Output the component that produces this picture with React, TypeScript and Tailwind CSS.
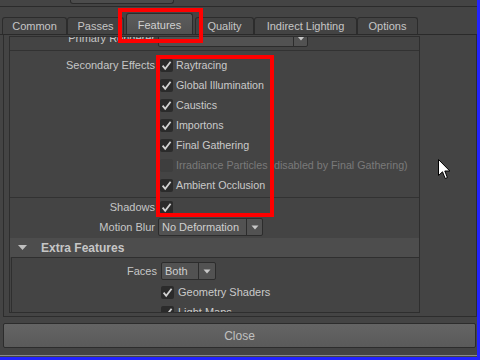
import React from "react";

const Check = ({ on = true, disabled = false }: { on?: boolean; disabled?: boolean }) => (
  <div
    className={
      "w-[13px] h-[13px] rounded-[2px] flex items-center justify-center shrink-0 " +
      (disabled ? "bg-[#3e3e3e]" : "bg-[#2b2b2b]")
    }
  >
    {on && (
      <svg width="13" height="13" viewBox="0 0 13 13">
        <path d="M2.6 6.6 L5.2 9.8 L10.6 2.7" fill="none" stroke="#d2d2d2" strokeWidth="1.8" />
      </svg>
    )}
  </div>
);

const Arrow = () => (
  <svg width="8" height="5" viewBox="0 0 8 5">
    <path d="M0.5 0.5 L7.5 0.5 L4 4.5 Z" fill="#c8c8c8" />
  </svg>
);

const Drop = ({ text, w, aw, pl }: { text: string; w: string; aw: string; pl: string }) => (
  <div
    className={
      "h-[18px] flex border border-[#2c2c2c] rounded-[2px] bg-[#525252] text-[#cfcfcf] " + w
    }
  >
    <div className={"flex-1 flex items-center leading-none " + pl}>{text}</div>
    <div className={"border-l border-[#2c2c2c] flex items-center justify-center " + aw}>
      <Arrow />
    </div>
  </div>
);

const CRow = ({ label, disabled = false, on = true }: { label: string; disabled?: boolean; on?: boolean }) => (
  <div className="h-[20px] flex items-center gap-[3px] pl-[2px]">
    <Check on={on} disabled={disabled} />
    <span className={"text-[10.7px] " + (disabled ? "text-[#7a7a7a]" : "text-[#cacaca]")}>{label}</span>
  </div>
);

export default function App() {
  const tabs = [
    { t: "Common", w: "w-[65px]" },
    { t: "Passes", w: "w-[57px]" },
  ];
  const tabs2 = [
    { t: "Quality", w: "w-[59px]" },
    { t: "Indirect Lighting", w: "w-[103px]" },
    { t: "Options", w: "w-[61px]" },
  ];
  return (
    <div
      className="w-[480px] h-[360px] bg-[#444444] relative overflow-hidden flex flex-col text-[11px] text-[#c6c6c6] border-r-[3px] border-b-[3px] border-[#2323ff]"
      style={{ fontFamily: '"Liberation Sans", Arial, sans-serif' }}
    >
      {/* top strip */}
      <div className="h-[7px] border-b border-[#2b2b2b] shrink-0">
        <div className="ml-[70px] w-[104px] h-[4px] border border-t-0 border-[#2b2b2b] rounded-b-[3px] bg-[#4c4c4c]" />
      </div>
      {/* tabs */}
      <div className="h-[28px] shrink-0 flex items-end pl-[2px] border-b border-[#2a2a2a]">
        {tabs.map((x) => (
          <div
            key={x.t}
            className={
              "h-[17px] border border-b-0 border-[#2c2c2c] rounded-t-[3px] bg-[#434343] flex items-center justify-center leading-none " +
              x.w
            }
          >
            {x.t}
          </div>
        ))}
        <div className="ml-[2px] w-[67px] h-[21px] border border-b-0 border-[#2c2c2c] rounded-t-[3px] bg-gradient-to-b from-[#5c5c5c] to-[#515151] flex items-center justify-center leading-none pt-[2px] text-[#d0d0d0]">
          Features
        </div>
        <div className="w-[2px]" />
        {tabs2.map((x) => (
          <div
            key={x.t}
            className={
              "h-[17px] border border-b-0 border-[#2c2c2c] rounded-t-[3px] bg-[#434343] flex items-center justify-center leading-none " +
              x.w
            }
          >
            {x.t}
          </div>
        ))}
      </div>
      {/* pane */}
      <div className="h-[282px] shrink-0 ml-[3px] border-l border-r border-b border-[#2d2d2d] pt-[1px] pl-[5px] flex">
        <div className="w-[411px] h-[277px] border border-[#2e2e2e] overflow-hidden">
          <div className="mt-[-8px]">
            {/* primary renderer */}
            <div className="h-[18px] flex items-center">
              <div className="w-[145px] text-right">Primary Renderer</div>
              <div className="ml-[3px] w-[150px] h-[18px] flex border border-[#2c2c2c] rounded-[2px] bg-[#525252]">
                <div className="flex-1" />
                <div className="w-[14px] border-l border-[#2c2c2c] flex items-center justify-center">
                  <Arrow />
                </div>
              </div>
            </div>
            <div className="mt-[3px] h-[1px] bg-[#323232]" />
            {/* secondary effects */}
            <div className="mt-[4px] flex">
              <div className="w-[145px] text-right h-[20px] leading-[20px]">Secondary Effects</div>
              <div className="ml-[3px] flex flex-col">
                <CRow label="Raytracing" />
                <CRow label="Global Illumination" />
                <CRow label="Caustics" />
                <CRow label="Importons" />
                <CRow label="Final Gathering" />
                <CRow label="Irradiance Particles (disabled by Final Gathering)" disabled on={false} />
                <CRow label="Ambient Occlusion" />
              </div>
            </div>
            <div className="mt-[2px] h-[1px] bg-[#323232]" />
            <div className="h-[18px] flex items-center">
              <div className="w-[145px] text-right">Shadows</div>
              <div className="ml-[5px]">
                <Check />
              </div>
            </div>
            <div className="mt-[2px] h-[18px] flex items-center">
              <div className="w-[145px] text-right">Motion Blur</div>
              <div className="ml-[3px]">
                <Drop text="No Deformation" w="w-[105px]" aw="w-[16px]" pl="pl-[3px]" />
              </div>
            </div>
            {/* header */}
            <div className="mt-[2px] h-[19px] bg-[#4d4d4d] flex items-center">
              <div className="ml-[8px] w-[9px] flex justify-center">
                <svg width="9" height="6" viewBox="0 0 9 6">
                  <path d="M0 0 L9 0 L4.5 5 Z" fill="#bfbfbf" />
                </svg>
              </div>
              <div className="ml-[14px] font-bold text-[12px] text-[#c6c6c6]">Extra Features</div>
            </div>
            {/* nested frame */}
            <div className="ml-[1px] border-l border-t border-[#2f2f2f] pt-[4px]">
              <div className="h-[18px] flex items-center">
                <div className="w-[145px] text-right">Faces</div>
                <div className="ml-[4px]">
                  <Drop text="Both" w="w-[55px]" aw="w-[17px]" pl="pl-[3px]" />
                </div>
              </div>
              <div className="mt-[3px] h-[18px] flex items-center">
                <div className="w-[145px]" />
                <div className="ml-[4px] flex items-center gap-[4px]">
                  <Check />
                  <span className="text-[#cacaca]">Geometry Shaders</span>
                </div>
              </div>
              <div className="mt-[2px] h-[18px] flex items-center">
                <div className="w-[145px]" />
                <div className="ml-[4px] flex items-center gap-[4px]">
                  <Check />
                  <span className="text-[#cacaca]">Light Maps</span>
                </div>
              </div>
            </div>
          </div>
        </div>
        <div className="flex-1" />
      </div>
      {/* close button */}
      <div className="mt-[6px] ml-[3px] mr-[1px] h-[25px] shrink-0 border border-[#2c2c2c] rounded-[2px] bg-gradient-to-b from-[#646464] to-[#5a5a5a] flex items-center justify-center text-[#c0c0c0] text-[12px]">
        Close
      </div>
      <div className="mt-[7px] h-[1px] bg-[#8a8a8a] shrink-0" />

      {/* red highlight overlays */}
      <div className="absolute left-[118px] top-[8px] w-[85px] h-[35px] border-4 border-[#ff0000]" />
      <div className="absolute left-[156px] top-[55px] w-[118px] h-[162px] border-4 border-[#ff0000]" />

      {/* cursor */}
      <svg className="absolute left-[438px] top-[159px]" width="13" height="21" viewBox="0 0 13 21">
        <path d="M0.5 0.5 L0.5 16.5 L4.5 12.8 L7.2 19.5 L9.4 18.6 L6.8 12 L11.8 12 Z" fill="#ffffff" stroke="#000000" strokeWidth="1" />
      </svg>
    </div>
  );
}
